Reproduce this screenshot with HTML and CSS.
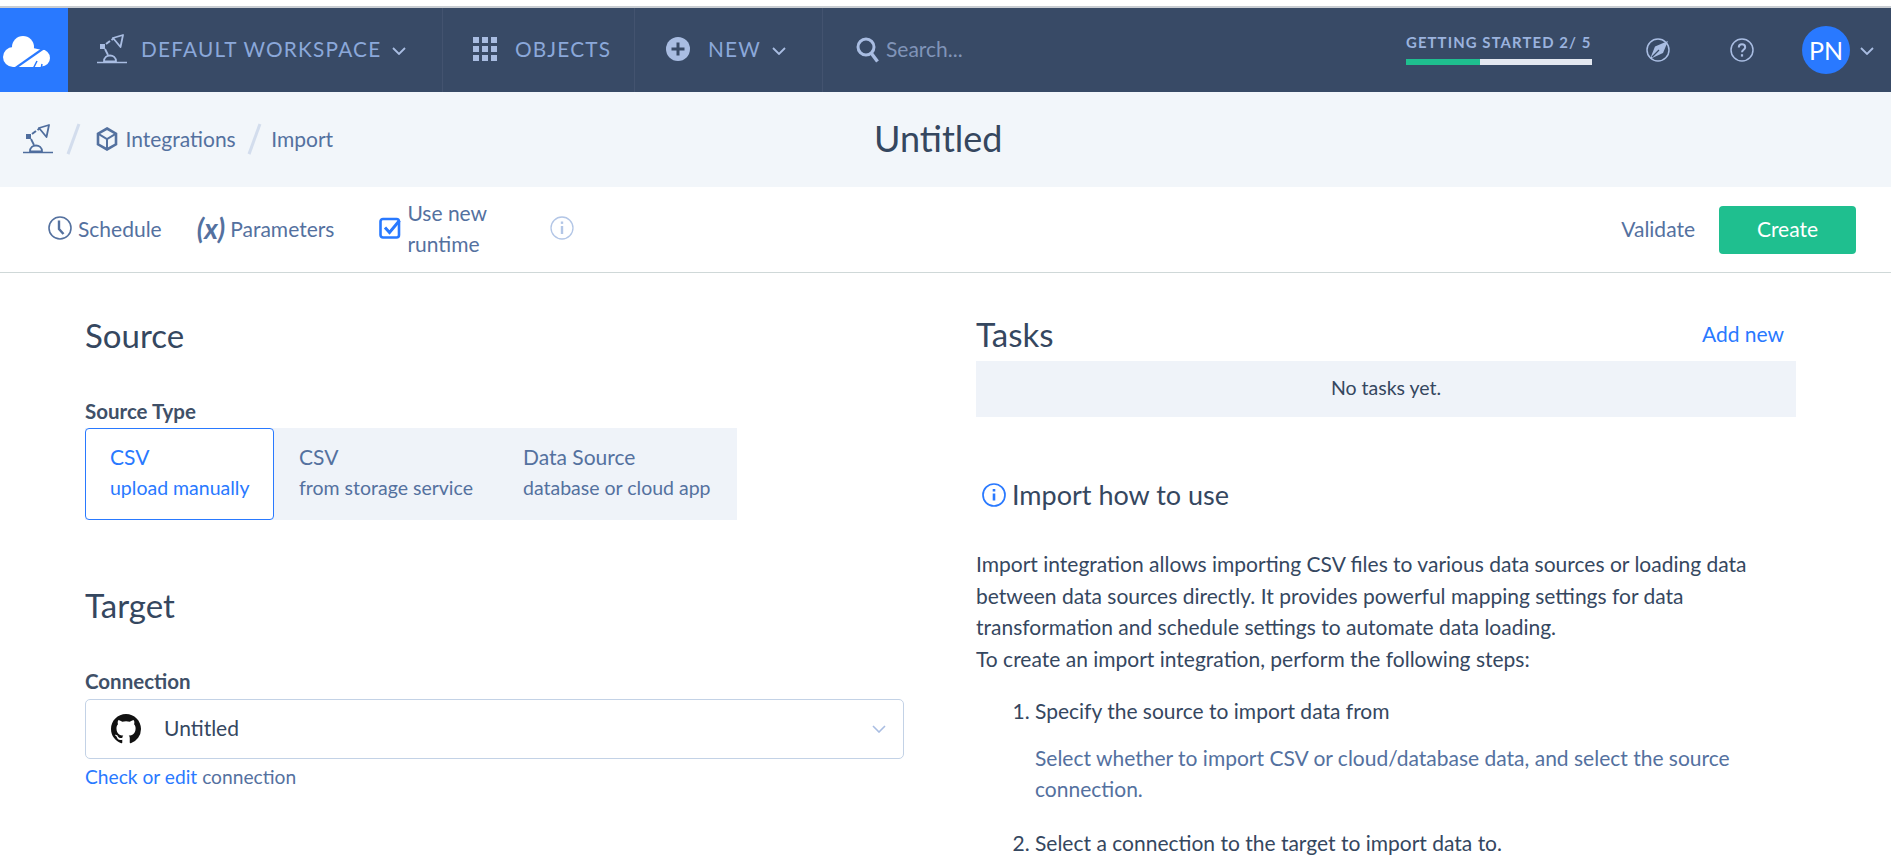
FILE: index.html
```html
<!DOCTYPE html>
<html>
  <head>
    <meta charset="UTF-8">
    <title>Untitled - Import</title>
    <link rel="stylesheet" href="styles.css">
  </head>
  <body>
    <svg class="sprites" width="0" height="0">
      <symbol id="lamp" viewBox="0 0 30 30">
        <path d="M0 28.500h30" fill="none" stroke="currentColor" stroke-width="1.500"/>
        <path d="M7 27.500c0-4 3-6 6-6s6 2 6 6z" fill="none" stroke="currentColor" stroke-width="1.800"/>
        <path d="M11 21l-3-6" fill="none" stroke="currentColor" stroke-width="1.800"/>
        <rect x="3" y="10" width="5" height="5" fill="currentColor"/>
        <path d="M9 10l4-3M14.500 6l2-1.500" fill="none" stroke="currentColor" stroke-width="2"/>
        <path d="M16 4l10-3-2.500 12z" fill="none" stroke="currentColor" stroke-width="1.800" stroke-linejoin="round"/>
      </symbol>
    </svg>

    <header class="navbar">
      <a class="logo">
        <svg width="47" height="32" viewBox="0 0 47 32">
          <g fill="#fff">
            <circle cx="10" cy="21" r="10"/>
            <circle cx="20" cy="11" r="11"/>
            <circle cx="38.500" cy="22" r="8.500"/>
            <path d="M10 12h20l9 2v17H10z"/>
          </g>
          <path d="M11 33L41 12" stroke="#2979ff" stroke-width="2.200"/>
          <path d="M30 33l4-8M38 33l1-5" stroke="#2979ff" stroke-width="1.500"/>
        </svg>
      </a>
      <div class="nav-section nav-workspace">
        <svg class="nav-lamp"><use href="#lamp"/></svg>
        <span class="nav-label">DEFAULT WORKSPACE</span>
        <svg class="chev" viewBox="0 0 14 8"><path d="M1 1l6 6 6-6"/></svg>
      </div>
      <div class="nav-section nav-objects">
        <div class="grid-icon">
          <i></i><i></i><i></i><i></i><i></i><i></i><i></i><i></i><i></i>
        </div>
        <span class="nav-label">OBJECTS</span>
      </div>
      <div class="nav-section nav-new">
        <svg width="24" height="24" viewBox="0 0 24 24">
          <circle cx="12" cy="12" r="12" fill="#a9bde2"/>
          <path d="M12 5.500v13M5.500 12h13" stroke="#384a66" stroke-width="3"/>
        </svg>
        <span class="nav-label">NEW</span>
        <svg class="chev" viewBox="0 0 14 8"><path d="M1 1l6 6 6-6"/></svg>
      </div>
      <div class="nav-search">
        <svg width="24" height="26" viewBox="0 0 24 26" fill="none" stroke="#a9bde2">
          <circle cx="10" cy="10" r="8" stroke-width="3"/>
          <path d="M15.500 16.500l6 8" stroke-width="3.500"/>
        </svg>
        <span>Search...</span>
      </div>
      <div class="nav-right">
        <div class="progress">
          <span class="progress-label">GETTING STARTED 2/ 5</span>
          <div class="progress-bar"><div class="progress-fill" style="width: 40%"></div></div>
        </div>
        <svg class="nav-round compass" viewBox="0 0 24 24" fill="none" stroke="#a9bde2">
          <circle cx="12" cy="12" r="11" stroke-width="1.500"/>
          <path d="M22 3L9 8.500 4 21l13-6z" fill="#a9bde2" stroke="none"/>
          <path d="M6 19l7-7" stroke="#384a66" stroke-width="1.200"/>
        </svg>
        <svg class="nav-round help" viewBox="0 0 24 24" fill="none" stroke="#a9bde2">
          <circle cx="12" cy="12" r="11" stroke-width="1.500"/>
          <path d="M8.800 9.500c0-2 1.400-3.200 3.200-3.200s3.200 1.200 3.200 3c0 2.500-3.200 2.500-3.200 5" stroke-width="2"/>
          <path d="M12 16.200v2.400" stroke-width="2.200"/>
        </svg>
        <div class="avatar">PN</div>
        <svg class="chev chev-user" viewBox="0 0 14 8"><path d="M1 1l6 6 6-6"/></svg>
      </div>
    </header>

    <div class="subheader">
      <nav class="crumbs">
        <svg class="crumb-lamp"><use href="#lamp"/></svg>
        <span class="slash slash-home"></span>
        <svg class="cube" viewBox="0 0 22 24" fill="none" stroke="#54719f" stroke-width="2.600">
          <path d="M11 1.500l9 5.200v10.600l-9 5.200-9-5.200V6.700z"/>
          <path d="M2 6.700l9 5.300 9-5.300M11 12v10.500" stroke-width="2"/>
        </svg>
        <a class="crumb-link">Integrations</a>
        <span class="slash"></span>
        <a class="crumb-link">Import</a>
      </nav>
      <h1 class="title">Untitled</h1>
    </div>

    <div class="toolbar">
      <a class="tool tool-schedule">
        <svg width="24" height="24" viewBox="0 0 24 24" fill="none" stroke="#54719f">
          <circle cx="12" cy="12" r="11" stroke-width="1.600"/>
          <path d="M11 4.500V13l4.500 5" stroke-width="2.400"/>
        </svg>
        Schedule
      </a>
      <a class="tool tool-params"><span class="fx">(x)</span>Parameters</a>
      <label class="tool tool-runtime">
        <svg width="22" height="22" viewBox="0 0 22 22" fill="none">
          <rect x="1.500" y="2" width="18.500" height="18.500" rx="2.500" stroke="#2979ff" stroke-width="2.600"/>
          <path d="M6 10.500l4.500 5L20.500 3.500" stroke="#2979ff" stroke-width="3"/>
        </svg>
        <span class="runtime-text">Use new runtime</span>
      </label>
      <svg class="tool-info" viewBox="0 0 24 24" fill="none" stroke="#b3c6e6">
        <circle cx="12" cy="12" r="11" stroke-width="1.300"/>
        <path d="M12 10v8" stroke-width="2.400"/>
        <path d="M12 5.500v2.400" stroke-width="2.400"/>
      </svg>
      <div class="toolbar-right">
        <a class="validate">Validate</a>
        <button class="create">Create</button>
      </div>
    </div>

    <main class="content">
      <section class="col">
        <h2 class="section-title">Source</h2>
        <div class="field-label field-source">Source Type</div>
        <div class="segments">
          <div class="segment active"><span>CSV</span><span>upload manually</span></div>
          <div class="segment"><span>CSV</span><span>from storage service</span></div>
          <div class="segment seg-data"><span>Data Source</span><span>database or cloud app</span></div>
        </div>
        <h2 class="section-title title-target">Target</h2>
        <div class="field-label field-connection">Connection</div>
        <div class="select">
          <svg width="30" height="30" viewBox="0 0 16 16" fill="#111">
            <path d="M8 0C3.580 0 0 3.580 0 8c0 3.540 2.290 6.530 5.470 7.590.4.070.55-.17.55-.38 0-.19-.01-.82-.01-1.490-2.010.37-2.530-.49-2.690-.94-.09-.23-.48-.94-.82-1.130-.28-.15-.68-.52-.01-.53.63-.01 1.080.58 1.230.82.72 1.210 1.870.87 2.330.66.07-.52.28-.87.51-1.070-1.780-.2-3.640-.89-3.640-3.950 0-.87.31-1.590.82-2.150-.08-.2-.36-1.020.08-2.120 0 0 .67-.21 2.200.82.64-.18 1.320-.27 2-.27.68 0 1.360.09 2 .27 1.530-1.040 2.200-.82 2.200-.82.44 1.100.16 1.920.08 2.120.51.56.82 1.270.82 2.150 0 3.070-1.870 3.750-3.650 3.950.29.25.54.73.54 1.480 0 1.070-.01 1.930-.01 2.200 0 .21.15.46.55.38A8.013 8.013 0 0016 8c0-4.420-3.580-8-8-8z"/>
          </svg>
          <span class="select-value">Untitled</span>
          <svg class="select-chev" viewBox="0 0 14 8"><path d="M1 1l6 6 6-6"/></svg>
        </div>
        <div class="check-link"><a>Check or edit</a> connection</div>
      </section>

      <section class="col">
        <div class="tasks-head">
          <h2 class="section-title">Tasks</h2>
          <a class="add-new">Add new</a>
        </div>
        <div class="tasks-empty">No tasks yet.</div>
        <h3 class="howto">
          <svg width="24" height="24" viewBox="0 0 24 24" fill="none" stroke="#2979ff">
            <circle cx="12" cy="12" r="11" stroke-width="1.700"/>
            <path d="M12 10.500v7" stroke-width="2.600"/>
            <path d="M12 6v2.500" stroke-width="2.600"/>
          </svg>
          Import how to use
        </h3>
        <p class="intro">Import integration allows importing CSV files to various data sources or loading data between data sources directly. It provides powerful mapping settings for data transformation and schedule settings to automate data loading.<br>To create an import integration, perform the following steps:</p>
        <ol class="steps">
          <li>Specify the source to import data from
            <p>Select whether to import CSV or cloud/database data, and select the source connection.</p>
          </li>
          <li>Select a connection to the target to import data to.</li>
        </ol>
      </section>
    </main>
  </body>
</html>
```

FILE: styles.css
```css
* {
  box-sizing: border-box;
}

html,
body {
  height: 859px;
  overflow: hidden;
}

body {
  margin: 0;
  padding-top: 6px;
  background-color: white;
  color: #35475f;
  font-family: Lato, sans-serif;
  font-size: 21px;
  font-variant-ligatures: common-ligatures;
}

.sprites {
  display: block;
  height: 0;
}

h1,
h2,
h3,
p {
  margin: 0;
  font-weight: 400;
}

/* top bar */
.navbar {
  display: flex;
  align-items: stretch;
  height: 86px;
  border-top: 2px solid #c9cdd2;
  background-color: #384a66;
  color: #8ba8da;
}

.logo {
  display: flex;
  align-items: center;
  width: 68px;
  padding: 3px 0 0 3px;
  background-color: #2979ff;
}

.nav-section {
  display: flex;
  align-items: center;
  padding-bottom: 3px;
  border-right: 1px solid #43536f;
}

.nav-workspace {
  width: 375px;
  padding-left: 29px;
}

.nav-objects {
  width: 192px;
  padding-left: 30px;
}

.nav-new {
  width: 188px;
  padding-left: 31px;
}

.nav-label {
  font-size: 20.800px;
  letter-spacing: 1.200px;
}

.nav-lamp {
  width: 30px;
  height: 30px;
  color: #a9bde2;
  margin-right: 14px;
}

.nav-workspace .chev {
  margin-left: 11px;
}

.nav-new .nav-label {
  margin-left: 18px;
}

.nav-new .chev {
  margin-left: 11px;
}

.chev {
  width: 14px;
  height: 8px;
  margin-top: 4px;
  fill: none;
  stroke: #a9bde2;
  stroke-width: 1.800;
}

.grid-icon {
  display: grid;
  grid-template-columns: repeat(3, 6px);
  gap: 3px;
  margin-right: 18px;
}

.grid-icon i {
  height: 6px;
  background-color: #a9bde2;
}

.nav-search {
  display: flex;
  align-items: center;
  gap: 6px;
  padding: 0 0 3px 33px;
  color: #8094b8;
  font-size: 21px;
}

.nav-search svg {
  margin-top: 2px;
}

.nav-right {
  display: flex;
  align-items: center;
  margin-left: auto;
  padding-right: 17px;
}

.progress {
  display: flex;
  flex-direction: column;
  width: 186px;
  margin-right: 54px;
  margin-top: -2px;
}

.progress-label {
  font-size: 14.900px;
  font-weight: 700;
  letter-spacing: 1.100px;
  white-space: nowrap;
  color: #9bb3de;
}

.progress-bar {
  height: 6px;
  margin-top: 8px;
  background-color: #e3e8f0;
}

.progress-fill {
  height: 100%;
  background-color: #1fbf8f;
}

.nav-round {
  width: 24px;
  height: 24px;
}

.compass {
  margin-right: 60px;
}

.help {
  margin-right: 48px;
}

.avatar {
  display: flex;
  align-items: center;
  justify-content: center;
  width: 48px;
  height: 48px;
  border-radius: 50%;
  background-color: #2979ff;
  color: white;
  font-size: 25px;
}

.chev-user {
  margin: 2px 0 0 10px;
}

/* breadcrumb strip */
.subheader {
  display: flex;
  align-items: center;
  position: relative;
  height: 95px;
  padding: 0 0 2px 23px;
  background-color: #f2f6fa;
}

.crumbs {
  display: flex;
  align-items: center;
  color: #54719f;
}

.crumb-lamp {
  width: 30px;
  height: 30px;
  color: #4f6d9d;
}

.slash {
  width: 2.500px;
  height: 32px;
  margin: 0 16px 0 17px;
  background-color: #d3dded;
  transform: rotate(20deg);
}

.slash-home {
  margin: 0 21px 0 19px;
}

.cube {
  width: 22px;
  height: 24px;
  margin-right: 8px;
}

.title {
  position: absolute;
  left: 874px;
  top: 24px;
  font-size: 36px;
  line-height: 44px;
  color: #35475f;
}

/* actions under the strip */
.toolbar {
  display: flex;
  align-items: center;
  height: 86px;
  padding: 0 35px 3px 48px;
  border-bottom: 1px solid #cfd8d8;
  color: #54719f;
}

.tool {
  display: flex;
  align-items: center;
}

.tool-schedule {
  gap: 6px;
  margin-right: 35px;
}

.tool-params {
  margin-right: 45px;
}

.fx {
  margin-right: 5px;
  font-size: 28px;
  font-weight: 700;
  font-style: italic;
}

.tool-runtime {
  gap: 6px;
}

.runtime-text {
  width: 90px;
  line-height: 31px;
}

.tool-info {
  width: 24px;
  height: 24px;
  margin-left: 53px;
}

.toolbar-right {
  display: flex;
  align-items: center;
  margin-left: auto;
  gap: 24px;
}

.create {
  width: 137px;
  height: 48px;
  margin-top: 4px;
  padding-bottom: 4px;
  border: none;
  border-radius: 4px;
  background-color: #1fbf8f;
  color: white;
  font: inherit;
}

/* two columns */
.content {
  display: grid;
  grid-template-columns: 819px 820px;
  gap: 72px;
  padding: 41px 0 0 85px;
}

.section-title {
  font-size: 33px;
  line-height: 42px;
}

.field-label {
  color: #3f5068;
  font-weight: 700;
  font-size: 20.500px;
  line-height: 24px;
}

.field-source {
  margin-top: 43px;
}

.segments {
  display: grid;
  grid-template-columns: 189px 225px 238px;
  width: 652px;
  height: 92px;
  margin-top: 5px;
  background-color: #eff3f9;
  color: #54719f;
}

.segment {
  display: flex;
  flex-direction: column;
  justify-content: center;
  gap: 5px;
  padding: 0 0 4px 25px;
  line-height: 26px;
  font-size: 19.500px;
  white-space: nowrap;
}

.segment span:first-child {
  font-size: 21px;
}

.seg-data {
  padding-left: 24px;
}

.segment.active {
  padding-left: 24px;
  border: 1px solid #2979ff;
  border-radius: 4px;
  background-color: white;
  color: #2979ff;
}

.title-target {
  margin-top: 64px;
}

.field-connection {
  margin-top: 43px;
}

.select {
  display: flex;
  align-items: center;
  height: 60px;
  margin-top: 6px;
  padding: 0 17px 0 25px;
  border: 1px solid #c3d2e6;
  border-radius: 5px;
}

.select-value {
  margin: 0 0 4px 23px;
}

.select-chev {
  width: 14px;
  height: 8px;
  margin-left: auto;
  fill: none;
  stroke: #a9bde2;
  stroke-width: 1.600;
}

.check-link {
  margin-top: 6px;
  color: #54719f;
  font-size: 19.200px;
  line-height: 24px;
}

.check-link a,
.add-new {
  color: #2979ff;
}

.tasks-head {
  display: flex;
  align-items: center;
  justify-content: space-between;
  height: 47px;
  padding: 0 12px 7px 0;
}

.add-new {
  margin-bottom: 2px;
}

.tasks-empty {
  display: flex;
  align-items: center;
  justify-content: center;
  height: 56px;
  padding-bottom: 4px;
  background-color: #eff3f9;
  font-size: 19.500px;
}

.howto {
  display: flex;
  align-items: center;
  gap: 6px;
  margin-top: 60px;
  padding-left: 6px;
  font-size: 27px;
  line-height: 36px;
}

.intro {
  margin-top: 35px;
  line-height: 31.500px;
}

.steps {
  margin: 21px 0 0;
  padding-left: 59px;
  line-height: 31.500px;
}

.steps li {
  margin-bottom: 22px;
}

.steps p {
  margin-top: 15px;
  color: #54719f;
}
```
